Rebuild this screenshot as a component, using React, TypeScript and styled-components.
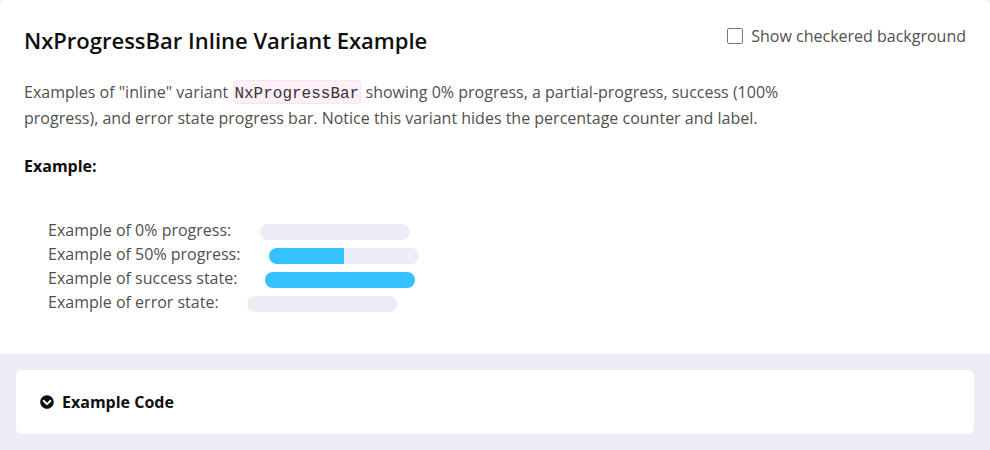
import React from "react";
import styled, { createGlobalStyle } from "styled-components";

const Global = createGlobalStyle`
  body { margin: 0; background: #ededf8; font-family: "Open Sans", sans-serif; font-size: 16px; color: #505050; -webkit-font-smoothing: antialiased; }
  * { box-sizing: border-box; }
`;
const Page = styled.main`height: 450px; display: flex; flex-direction: column; overflow: hidden;`;
const Tile = styled.section`height: 354px; flex: none; background: #fff; border-radius: 6px 6px 0 0;`;
const Header = styled.header`display: flex; justify-content: space-between; align-items: flex-start; padding: 24px 24px 0; height: 79px;`;
const Title = styled.h2`margin: -1px 0 0; font-size: 22px; line-height: 34px; font-weight: 600; color: #0f0f10;`;
const Toggle = styled.label`display: flex; align-items: center; gap: 8px; line-height: 24px;`;
const Box = styled.span`width: 16px; height: 16px; border: 1px solid #777; border-radius: 2px; background: #fff;`;
const Description = styled.p`margin: 0 0 0 24px; width: 780px; line-height: 26px;`;
const Code = styled.code`
  display: inline-block; height: 24px; margin: -3px 0 1px 1px; padding: 3px 0 0; width: 128px;
  vertical-align: middle; font: 16px/20px "Courier New", "Liberation Mono", monospace;
  color: #333; background: #ffeff9; border: 1px solid #ffe1ef; border-radius: 4px;
`;
const Subtitle = styled.h3`margin: 23px 24px 0; font-size: 16px; line-height: 24px; font-weight: 700; color: #0f0f10;`;
const Examples = styled.div`margin: 40px 48px 0; display: flex; flex-direction: column;`;
const Row = styled.div<{ $gap: number }>`display: flex; align-items: center; height: 24px; gap: ${p => p.$gap}px;`;
const Track = styled.div`width: 150px; height: 16px; margin-top: 3px; border-radius: 8px; background: #ededf8; overflow: hidden;`;
const Fill = styled.div<{ $value: number }>`height: 100%; width: ${p => p.$value}%; background: #33c1ff;`;
const Footer = styled.footer`flex: 1; padding: 16px;`;
const Accordion = styled.div`height: 64px; border-radius: 6px; background: #fff; padding: 0 24px; display: flex; align-items: center; gap: 8px; font-weight: 700; color: #0f0f10;`;

const rows = [
  { label: "Example of 0% progress:", value: 0, gap: 29 },
  { label: "Example of 50% progress:", value: 50, gap: 29 },
  { label: "Example of success state:", value: 100, gap: 28 },
  { label: "Example of error state:", value: 0, gap: 28 },
];

export default function App() {
  return (
    <Page>
      <Global />
      <Tile>
        <Header>
          <Title>NxProgressBar Inline Variant Example</Title>
          <Toggle><Box />Show checkered background</Toggle>
        </Header>
        <Description>
          Examples of "inline" variant <Code>NxProgressBar</Code> showing 0% progress, a partial-progress, success (100% progress), and error state progress bar. Notice this variant hides the percentage counter and label.
        </Description>
        <Subtitle>Example:</Subtitle>
        <Examples>
          {rows.map(r => (
            <Row key={r.label} $gap={r.gap}>
              <span>{r.label}</span>
              <Track><Fill $value={r.value} /></Track>
            </Row>
          ))}
        </Examples>
      </Tile>
      <Footer>
        <Accordion>
          <svg width="14" height="14" viewBox="0 0 512 512" fill="#0f0f10">
            <path d="M504 256c0 137-111 248-248 248S8 393 8 256 119 8 256 8s248 111 248 248zM273 369.900l135.500-135.500c9.400-9.400 9.400-24.600 0-33.900l-17-17c-9.400-9.400-24.600-9.400-33.900 0L256 285.100 154.400 183.500c-9.400-9.400-24.600-9.400-33.900 0l-17 17c-9.400 9.400-9.400 24.600 0 33.900L239 369.900c9.400 9.400 24.600 9.400 34 0z" />
          </svg>
          Example Code
        </Accordion>
      </Footer>
    </Page>
  );
}
